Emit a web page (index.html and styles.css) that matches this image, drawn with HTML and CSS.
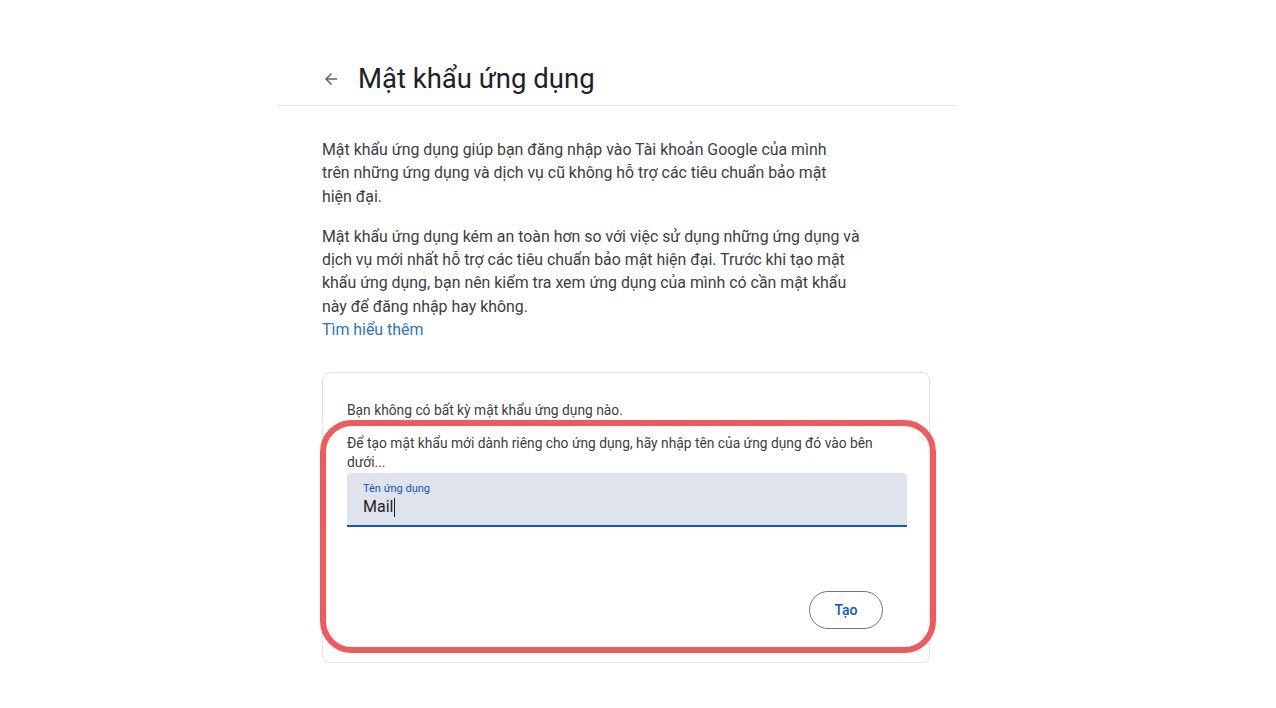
FILE: index.html
```html
<!DOCTYPE html>
<html lang="vi">
  <head>
    <meta charset="UTF-8" />
    <meta name="viewport" content="width=device-width, initial-scale=1.0" />
    <title>Mật khẩu ứng dụng</title>
    <link rel="stylesheet" href="styles.css">
  </head>
  <body>
    <div class="page">
      <div class="header">
        <span class="back">
          <svg width="18" height="18" viewBox="0 0 24 24">
            <path d="M20 11H7.83l5.59-5.59L12 4l-8 8 8 8 1.41-1.41L7.83 13H20v-2z" fill="#5f6368"/>
          </svg>
        </span>
        <h1>Mật khẩu ứng dụng</h1>
      </div>

      <div class="content">
        <p>Mật khẩu ứng dụng giúp bạn đăng nhập vào Tài khoản Google của mình trên&nbsp;những ứng dụng và dịch vụ cũ không hỗ trợ các tiêu chuẩn bảo mật hiện&nbsp;đại.</p>
        <p>Mật khẩu ứng dụng kém an toàn hơn so với việc sử dụng những ứng dụng và dịch vụ mới nhất hỗ trợ các tiêu chuẩn bảo mật hiện đại. Trước khi tạo mật khẩu ứng dụng, bạn nên kiểm tra xem ứng dụng của mình có cần mật khẩu này để đăng nhập hay không.<br><a href="#" class="learn">Tìm hiểu thêm</a></p>

        <div class="card">
          <div class="empty">Bạn không có bất kỳ mật khẩu ứng dụng nào.</div>
          <div class="hint">Để tạo mật khẩu mới dành riêng cho ứng dụng, hãy nhập tên của ứng dụng đó vào bên dưới...</div>
          <div class="field">
            <span class="field-label">Tên ứng dụng</span>
            <span class="field-value">Mail<span class="caret"></span></span>
          </div>
          <div class="actions">
            <button class="create-btn">Tạo</button>
          </div>
          <div class="highlight"></div>
        </div>
      </div>
    </div>
  </body>
</html>
```

FILE: styles.css
```css
* {
  box-sizing: border-box;
}
body {
  margin: 0;
  background-color: #fff;
  font-family: Roboto, "Noto Sans", Arial, sans-serif;
  color: #3c4043;
}
.page {
  width: 678px;
  margin-left: 278px;
  padding-top: 61px;
}
.header {
  display: flex;
  align-items: center;
  gap: 18px;
  padding: 0 0 8px 44px;
  border-bottom: 1px solid #e6e6e6;
}
.back {
  display: flex;
  width: 18px;
  height: 18px;
}
h1 {
  margin: 0;
  font-size: 27.5px;
  font-weight: 400;
  color: #202124;
  line-height: 36px;
}
.content {
  padding: 32px 0 0 44px;
}
p {
  width: 539px;
  margin: 0 0 17px;
  font-size: 15.9px;
  line-height: 23.3px;
}
.learn {
  color: #2a74c9;
  text-decoration: none;
}
.card {
  position: relative;
  width: 608px;
  height: 291px;
  margin-top: 31px;
  padding: 27px 24px 0;
  border: 1px solid #e3e3e3;
  border-radius: 8px;
}
.empty {
  font-size: 13.8px;
  line-height: 20px;
  margin-bottom: 14px;
}
.hint {
  font-size: 13.8px;
  line-height: 19px;
  width: 548px;
}
.field {
  display: flex;
  flex-direction: column;
  width: 560px;
  height: 54px;
  margin-top: 1px;
  padding: 9px 16px 0;
  background-color: #dfe3ec;
  border-bottom: 2px solid #0b57d0;
  border-radius: 4px 4px 0 0;
}
.field-label {
  font-size: 11px;
  line-height: 14px;
  color: #0b57d0;
}
.field-value {
  display: flex;
  align-items: center;
  font-size: 16px;
  line-height: 22px;
  color: #1f1f1f;
}
.caret {
  width: 1px;
  height: 19px;
  margin-left: 1px;
  background-color: #1f1f1f;
}
.actions {
  display: flex;
  justify-content: flex-end;
  padding: 64px 22px 0 0;
}
.create-btn {
  width: 74px;
  height: 38px;
  border: 1px solid #747775;
  border-radius: 19px;
  background: #fff;
  color: #0b57d0;
  font-family: inherit;
  font-size: 14px;
  font-weight: 500;
}
.highlight {
  position: absolute;
  left: -3px;
  top: 47px;
  width: 616px;
  height: 233px;
  border: 6px solid #ef5a5c;
  border-radius: 32px;
}
```
